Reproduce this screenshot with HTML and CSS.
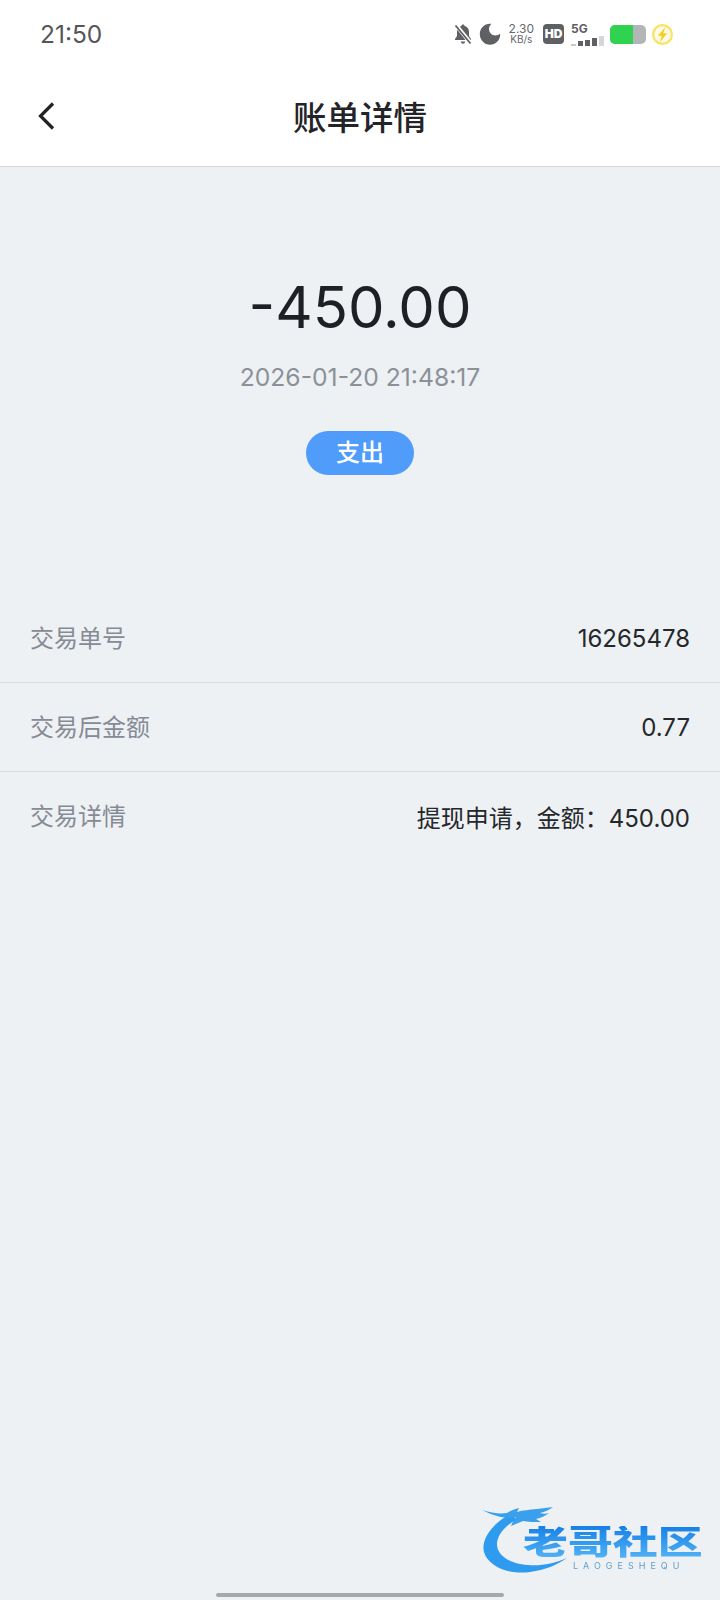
FILE: index.html
```html
<!DOCTYPE html>
<html>
<head>
    <meta charset="UTF-8">
    <title>账单详情</title>
    <link rel="stylesheet" href="styles.css">
</head>
<body>
    <div class="page">
        <div class="status-bar">
            <span class="status-time">21:50</span>
            <div class="status-icons">
                <svg class="icon-bell" viewBox="0 0 20 22" width="20" height="22">
                    <path d="M10 1.500c.9 0 1.500.6 1.600 1.400 2.700.7 4.400 3 4.400 5.800v4.200l2 3v1.100H2v-1.100l2-3V8.700c0-2.800 1.700-5.100 4.400-5.800.1-.8.7-1.400 1.600-1.400zM7.800 18.500h4.400c0 1.300-1 2.200-2.200 2.200s-2.200-.9-2.200-2.200z" fill="#5f6064"/>
                    <path d="M2.500 1.500l15.500 19" stroke="#fff" stroke-width="4"/>
                    <path d="M2.500 2.500l15 18" stroke="#5f6064" stroke-width="1.800"/>
                </svg>
                <svg class="icon-moon" viewBox="0 0 22 22" width="22" height="22">
                    <path d="M11 .7c.6 0 1 .1 1.400.2-1.500 1.200-2.400 3-2.400 5 0 3.600 2.900 6.500 6.500 6.500 1.700 0 3.300-.6 4.600-1.700.1.200.1.500.1.800 0 5.700-4.600 10.300-10.200 10.300S.8 16.900.8 11 5.300.7 11 .7z" fill="#5f6064"/>
                </svg>
                <div class="net-speed"><span>2.30</span><span class="net-unit">KB/s</span></div>
                <span class="hd-badge">HD</span>
                <div class="signal">
                    <span class="signal-label">5G</span>
                    <div class="signal-bars">
                        <i class="bar bar-1"></i><i class="bar bar-2"></i><i class="bar bar-3"></i><i class="bar bar-4"></i><i class="bar bar-5"></i>
                    </div>
                </div>
                <div class="battery"><div class="battery-level"></div></div>
                <svg class="icon-charge" viewBox="0 0 22 22" width="23" height="23">
                    <circle cx="11" cy="11" r="9" fill="#fdfbe6" stroke="#f8e36a" stroke-width="2.200"/>
                    <path d="M14 3.500L6.500 12.300h3.800L8.500 18.500l7-8.800h-3.800z" fill="#f5cf1f"/>
                </svg>
            </div>
        </div>

        <div class="nav-bar">
            <svg class="back-icon" viewBox="0 0 20 32" width="20" height="32">
                <path d="M17 3.500L4.500 16 17 28.500" fill="none" stroke="#222326" stroke-width="3.200"/>
            </svg>
            <h1 class="nav-title">账单详情</h1>
        </div>

        <div class="summary">
            <div class="amount">-450.00</div>
            <div class="time">2026-01-20 21:48:17</div>
            <div class="tag">支出</div>
        </div>

        <div class="detail-list">
            <div class="detail-row">
                <span class="detail-label">交易单号</span>
                <span class="detail-value">16265478</span>
            </div>
            <div class="detail-row">
                <span class="detail-label">交易后金额</span>
                <span class="detail-value">0.77</span>
            </div>
            <div class="detail-row">
                <span class="detail-label">交易详情</span>
                <span class="detail-value">提现申请，金额：450.00</span>
            </div>
        </div>

        <!-- watermark -->
        <div class="watermark">
            <svg class="wm-dragon" viewBox="0 0 110 80" width="110" height="80">
                <path d="M28 9C8 20-1 36 2 47c4 14 24 23 46 20 15-2 27-7 37-14-14 6-26 8-39 7C28 59 14 50 15 38c1-9 8-17 20-24z" fill="#2f9bef"/>
                <path d="M0 5c10 3 17 4 25 3 3-2 7-4 12-5l-2 4c6-2 12-2 20-3l16-2c-4 3-8 5-13 6 3 1 6 1 9 0-4 3-8 5-13 6l5 3c-7 0-13 0-18-1l-12 5c1-3 3-6 5-9-10 2-20 0-34-7z" fill="#3a9fec"/>
            </svg>
            <div class="wm-name">老哥社区</div>
            <div class="wm-sub">LAOGESHEQU</div>
        </div>

        <div class="home-indicator"></div>
    </div>
</body>
</html>
```

FILE: styles.css
```css
* {
    box-sizing: border-box;
}

body {
    margin: 0;
    background: #edf1f4;
    font-family: Inter, "Noto Sans CJK SC", sans-serif;
}

.page {
    position: relative;
    width: 720px;
    height: 1600px;
    overflow: hidden;
    background: #edf1f4;
}

.status-bar {
    display: flex;
    justify-content: space-between;
    align-items: center;
    height: 68px;
    padding: 0 46px 0 40px;
    background: #fff;
}

.status-time {
    font-size: 24.500px;
    color: #55565a;
}

.status-icons {
    display: flex;
    align-items: center;
    gap: 6px;
}

.net-speed {
    display: flex;
    flex-direction: column;
    align-items: center;
    margin-left: 2px;
    font-size: 12px;
    line-height: 10px;
    color: #66676b;
}

.net-unit {
    font-size: 10px;
}

.hd-badge {
    width: 21px;
    height: 20px;
    margin-left: 3px;
    border-radius: 4px;
    background: #5f6064;
    color: #fff;
    font-size: 12px;
    font-weight: 900;
    line-height: 20px;
    text-align: center;
}

.signal {
    display: flex;
    flex-direction: column;
    width: 33px;
    margin-left: 1px;
}

.signal-label {
    font-size: 12px;
    font-weight: 700;
    line-height: 12px;
    color: #5f6064;
}

.signal-bars {
    display: flex;
    align-items: flex-end;
    gap: 2px;
    height: 11px;
}

.bar {
    display: block;
    width: 5px;
    background: #5f6064;
}

.bar-1 {
    height: 2px;
    background: #c9cacc;
}

.bar-2 {
    height: 5px;
}

.bar-3 {
    height: 6px;
}

.bar-4 {
    height: 8px;
}

.bar-5 {
    height: 10px;
    background: #d5d6d8;
}

.battery {
    position: relative;
    width: 36px;
    height: 19px;
    border-radius: 5px;
    background: #b4b5b7;
    overflow: hidden;
}

.battery-level {
    width: 23px;
    height: 100%;
    background: #2fd350;
}

.icon-charge {
    margin-left: -1px;
}

.nav-bar {
    position: relative;
    display: flex;
    justify-content: center;
    align-items: center;
    height: 99px;
    padding-bottom: 4px;
    background: #fff;
    border-bottom: 1px solid #d6d7d9;
}

.back-icon {
    position: absolute;
    left: 36px;
    top: 32px;
}

.nav-title {
    margin: 0;
    font-size: 33.500px;
    font-weight: 500;
    color: #232427;
}

.summary {
    display: flex;
    flex-direction: column;
    align-items: center;
    height: 427px;
    padding-top: 104px;
}

.amount {
    font-size: 58px;
    line-height: 72px;
    color: #1d2025;
}

.time {
    margin-top: 18px;
    font-size: 24.700px;
    line-height: 32px;
    color: #8c9098;
}

.tag {
    width: 108px;
    height: 44px;
    margin-top: 38px;
    border-radius: 22px;
    background: #4f9cfb;
    color: #fff;
    font-size: 24px;
    font-weight: 500;
    line-height: 44px;
    text-align: center;
}

.detail-row {
    display: flex;
    justify-content: space-between;
    align-items: center;
    height: 89px;
    padding: 0 30px;
    border-bottom: 1px solid #d8dbdf;
}

.detail-row:last-child {
    border-bottom: none;
}

.detail-label {
    margin-bottom: 4px;
    font-size: 24px;
    color: #868a94;
}

.detail-value {
    font-size: 24px;
    color: #25272b;
}

.watermark {
    position: absolute;
    left: 482px;
    top: 1505px;
    width: 225px;
    height: 72px;
    filter: blur(0.6px);
}

.wm-dragon {
    position: absolute;
    left: 0;
    top: 0;
}

.wm-name {
    position: absolute;
    left: 41px;
    top: 21px;
    font-size: 33px;
    line-height: 33px;
    font-weight: 900;
    white-space: nowrap;
    background: linear-gradient(#1780e6, #52b4f6);
    -webkit-background-clip: text;
    background-clip: text;
    color: transparent;
    transform: scaleX(1.360);
    transform-origin: left center;
}

.wm-sub {
    position: absolute;
    left: 91px;
    top: 55px;
    font-size: 9px;
    letter-spacing: 5px;
    color: #5f9ed2;
}

.home-indicator {
    position: absolute;
    left: 216px;
    top: 1593px;
    width: 288px;
    height: 4px;
    border-radius: 2px;
    background: #a5a7aa;
}
```
